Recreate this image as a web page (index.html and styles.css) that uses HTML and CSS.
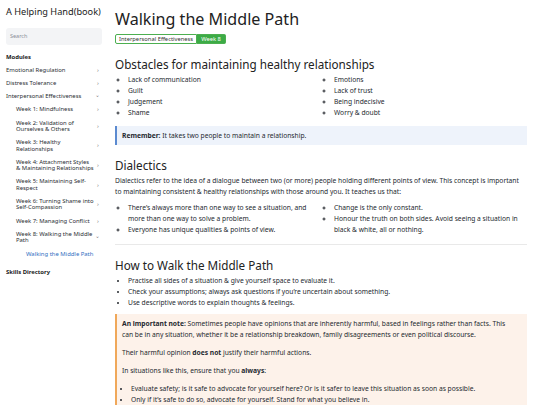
FILE: index.html
```html
<!DOCTYPE html>
<html lang="en">
<head>
<meta charset="utf-8">
<title>Walking the Middle Path</title>
<link rel="stylesheet" href="styles.css">
</head>
<body>
<div class="layout">
  <aside class="sidebar">
    <div class="brand">A Helping Hand(book)</div>
    <div class="search">Search</div>
    <div class="section-title">Modules</div>
    <ul class="nav">
      <li class="nav-item"><span>Emotional Regulation</span><span class="chev">›</span></li>
      <li class="nav-item"><span>Distress Tolerance</span><span class="chev">›</span></li>
      <li class="nav-item"><span>Interpersonal Effectiveness</span><span class="chev down">›</span></li>
      <li class="nav-item sub"><span>Week 1: Mindfulness</span><span class="chev">›</span></li>
      <li class="nav-item sub"><span>Week 2: Validation of Ourselves &amp; Others</span><span class="chev">›</span></li>
      <li class="nav-item sub"><span>Week 3: Healthy Relationships</span><span class="chev">›</span></li>
      <li class="nav-item sub"><span>Week 4: Attachment Styles &amp; Maintaining Relationships</span><span class="chev">›</span></li>
      <li class="nav-item sub"><span>Week 5: Maintaining Self-Respect</span><span class="chev">›</span></li>
      <li class="nav-item sub"><span>Week 6: Turning Shame into Self-Compassion</span><span class="chev">›</span></li>
      <li class="nav-item sub"><span>Week 7: Managing Conflict</span><span class="chev">›</span></li>
      <li class="nav-item sub"><span>Week 8: Walking the Middle Path</span><span class="chev down">›</span></li>
      <li class="nav-item subsub active"><span>Walking the Middle Path</span></li>
    </ul>
    <div class="section-title skills">Skills Directory</div>
  </aside>
  <main class="content">
    <h1 class="title">Walking the Middle Path</h1>
    <div class="badges"><span class="badge">Interpersonal Effectiveness</span><span class="badge solid">Week 8</span></div>

    <h2 class="heading">Obstacles for maintaining healthy relationships</h2>
    <div class="cols">
      <ul class="circle">
        <li>Lack of communication</li>
        <li>Guilt</li>
        <li>Judgement</li>
        <li>Shame</li>
      </ul>
      <ul class="circle">
        <li>Emotions</li>
        <li>Lack of trust</li>
        <li>Being indecisive</li>
        <li>Worry &amp; doubt</li>
      </ul>
    </div>
    <div class="callout info"><b>Remember:</b> It takes two people to maintain a relationship.</div>

    <h2 class="heading">Dialectics</h2>
    <p class="para">Dialectics refer to the idea of a dialogue between two (or more) people holding different points of view. This concept is important to maintaining consistent &amp; healthy relationships with those around you. It teaches us that:</p>
    <div class="cols">
      <ul class="circle">
        <li>There’s always more than one way to see a situation, and more than one way to solve a problem.</li>
        <li>Everyone has unique qualities &amp; points of view.</li>
      </ul>
      <ul class="circle">
        <li>Change is the only constant.</li>
        <li>Honour the truth on both sides. Avoid seeing a situation in black &amp; white, all or nothing.</li>
      </ul>
    </div>
    <hr class="rule">

    <h2 class="heading">How to Walk the Middle Path</h2>
    <ul class="disc">
      <li>Practise all sides of a situation &amp; give yourself space to evaluate it.</li>
      <li>Check your assumptions; always ask questions if you’re uncertain about something.</li>
      <li>Use descriptive words to explain thoughts &amp; feelings.</li>
    </ul>
    <div class="callout warn">
      <p><b>An important note:</b> Sometimes people have opinions that are inherently harmful, based in feelings rather than facts. This can be in any situation, whether it be a relationship breakdown, family disagreements or even political discourse.</p>
      <p>Their harmful opinion <b>does not</b> justify their harmful actions.</p>
      <p>In situations like this, ensure that you <b>always</b>:</p>
      <ul class="disc">
        <li>Evaluate safety; is it safe to advocate for yourself here? Or is it safer to leave this situation as soon as possible.</li>
        <li>Only if it’s safe to do so, advocate for yourself. Stand for what you believe in.</li>
      </ul>
    </div>
  </main>
</div>
</body>
</html>
```

FILE: styles.css
```css
* { box-sizing: border-box; }
html, body { margin: 0; padding: 0; }
body {
  font-family: "Noto Sans", "Open Sans", sans-serif;
  color: #24292f;
  background: #fff;
  font-size: 6.7px;
  line-height: 11px;
  width: 540px;
  height: 405px;
  overflow: hidden;
}
.layout { display: flex; }
.sidebar {
  width: 107px;
  flex: none;
  padding: 4px 0 0 6px;
}
.brand { font-size: 9.2px; line-height: 16px; color: #222; white-space: nowrap; }
.search {
  margin-top: 8px;
  height: 17px;
  width: 96px;
  background: #f3f4f6;
  border-radius: 3px;
  color: #8a8f96;
  font-size: 5.5px;
  line-height: 17px;
  padding-left: 4px;
}
.section-title { font-weight: 700; font-size: 5.9px; margin-top: 7.5px; line-height: 9px; color: #222; }
.nav { list-style: none; margin: 1.5px 0 0; padding: 0; }
.nav-item {
  display: flex;
  justify-content: space-between;
  align-items: center;
  font-size: 5.9px;
  line-height: 6.3px;
  padding: 3.5px 0;
  width: 96px;
  color: #2a2e33;
}
.nav-item.sub { padding-left: 10px; }
.nav-item.subsub { padding-left: 20px; color: #2f6fc1; }
.nav-item span:first-child { flex: 1; }
.chev { flex: none; width: 8px; text-align: center; color: #777; font-size: 6px; }
.chev.down { transform: rotate(90deg); }
.skills { margin-top: 8px; }

.content { flex: 1; padding: 8px 13px 0 8px; min-width: 0; }
.title { font-size: 16.1px; line-height: 22px; font-weight: 400; margin: 0; color: #222; }
.badges { display: flex; margin-top: 4px; }
.badge {
  font-size: 5.8px;
  line-height: 8px;
  border: 1px solid #4caf50;
  padding: 0 3px;
  border-radius: 2px 0 0 2px;
  color: #333;
}
.badge.solid { background: #3cab46; color: #fff; border-radius: 0 2px 2px 0; border-left: 0; padding: 0 4px; }
.heading { font-size: 11.7px; font-weight: 400; line-height: 16px; margin: 12px 0 2px; color: #222; }
.cols { display: grid; grid-template-columns: 1fr 1fr; }
ul.circle, ul.disc { margin: 0; padding-left: 13px; }
ul.circle { list-style: circle; }
ul.disc { list-style: disc; }
.cols ul { padding-right: 8px; }
.callout.info {
  margin-top: 8px;
  background: #eef3fb;
  border-left: 2px solid #5b8ad0;
  padding: 4px 9px 4px 5px;
}
.para { margin: 0 0 5px; }
.rule { border: 0; border-top: 1px solid #e9e9e9; margin: 9px 0 0; }
.callout.warn {
  margin-top: 6px;
  background: #fdf2ea;
  border-left: 2px solid #f0a85a;
  padding: 3.5px 20px 3.5px 5px;
}
.callout.warn p { margin: 0 0 7px; }
.callout.warn ul { padding-left: 9px; }
```
